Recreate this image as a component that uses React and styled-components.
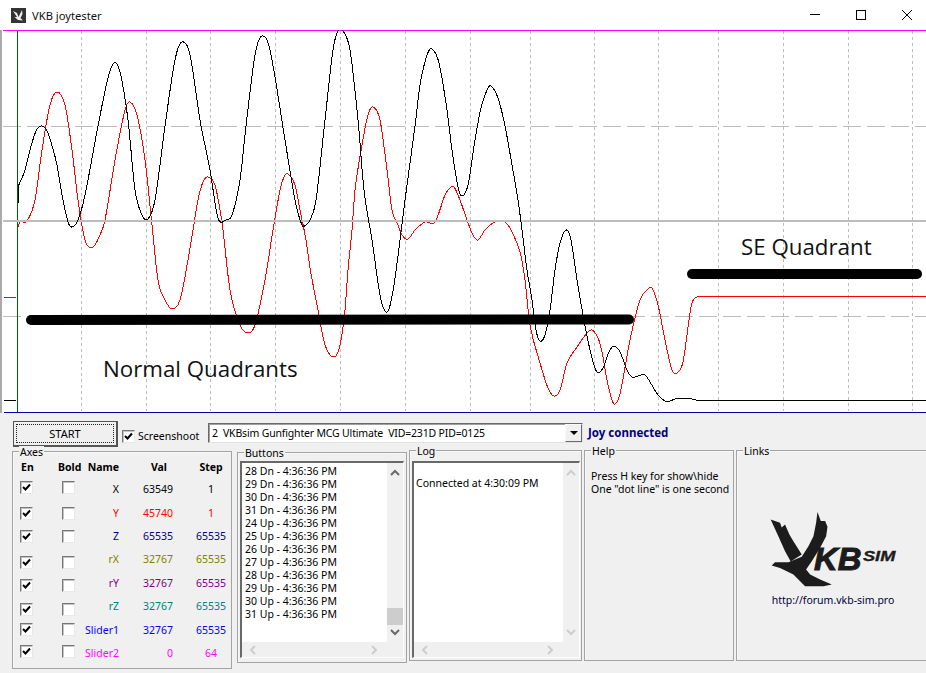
import React from 'react';
import styled, { createGlobalStyle } from 'styled-components';

const GlobalStyle = createGlobalStyle`
  html, body {
    margin: 0;
    padding: 0;
    background: #fff;
  }
  body {
    font-family: "Noto Sans", "Liberation Sans", sans-serif;
    font-size: 10.5px;
    color: #000;
    overflow: hidden;
  }
  * {
    box-sizing: border-box;
  }
`;

const Window = styled.div`
  width: 926px;
  height: 673px;
  display: flex;
  flex-direction: column;
  overflow: hidden;
`;

const TitleBar = styled.header`
  height: 30px;
  flex: none;
  display: flex;
  align-items: center;
  padding-left: 11px;
  background: #fff;
`;

const Title = styled.span`
  margin-left: 6px;
  font-size: 11.2px;
  color: #111;
`;

const WindowButtons = styled.div`
  margin-left: auto;
  margin-right: -4px;
  display: flex;
`;

const WindowButton = styled.span`
  width: 46px;
  height: 30px;
  display: flex;
  align-items: center;
  justify-content: center;
`;

const Chart = styled.main`
  position: relative;
  height: 383px;
  flex: none;
  border-left: 2px solid #aaa;
  background: #fff;

  svg {
    display: block;
  }
`;

const Note = styled.span`
  position: absolute;
  left: ${(props) => props.$left}px;
  top: ${(props) => props.$top}px;
  font-family: "Open Sans", "Noto Sans", sans-serif;
  font-size: 22.3px;
  line-height: 30px;
  color: #111;
  white-space: nowrap;
`;

const Panel = styled.section`
  flex: 1;
  display: flex;
  flex-direction: column;
  background: #f0f0f0;
`;

const Toolbar = styled.div`
  height: 37px;
  flex: none;
  display: flex;
  align-items: flex-start;
  padding: 8px 0 0 13px;
`;

const StartButton = styled.button`
  width: 105px;
  height: 26px;
  padding: 2px;
  font: inherit;
  font-size: 11px;
  color: #000;
  background: #f0f0f0;
  border: 1px solid #555;
  border-right-width: 2px;
  border-bottom-width: 2px;

  span {
    display: flex;
    height: 100%;
    align-items: center;
    justify-content: center;
    border: 1px dotted #222;
  }
`;

const CheckLabel = styled.label`
  display: flex;
  align-items: center;
  margin: 8px 0 0 4px;
  gap: 3px;
  width: 86px;
  white-space: nowrap;
`;

const Box = styled.span`
  width: 13px;
  height: 13px;
  flex: none;
  display: flex;
  align-items: center;
  justify-content: center;
  background: #fff;
  border: 1px solid;
  border-color: #777 #e8e8e8 #e8e8e8 #777;
  box-shadow: inset 1px 1px 0 #c4c4c4;
  transform: translateY(${(props) => props.$shift || 0}px);
`;

const Combo = styled.div`
  width: 375px;
  height: 20px;
  margin-top: 2px;
  display: flex;
  align-items: center;
  padding-left: 3px;
  background: #fff;
  border: 1px solid;
  border-color: #696969 #e3e3e3 #e3e3e3 #696969;
  box-shadow: inset 1px 1px 0 #a0a0a0;
  letter-spacing: -0.17px;
  white-space: pre;
`;

const ComboArrow = styled.span`
  margin-left: auto;
  width: 17px;
  height: 18px;
  display: flex;
  align-items: center;
  justify-content: center;
  background: #f0f0f0;
  border: 1px solid;
  border-color: #f8f8f8 #696969 #696969 #f8f8f8;

  &::after {
    content: '';
    border: 4px solid transparent;
    border-top: 4px solid #000;
    border-bottom: 0;
  }
`;

const Status = styled.strong`
  margin: 4px 0 0 5px;
  font-size: 11.5px;
  color: #000080;
  white-space: nowrap;
`;

const Groups = styled.div`
  flex: 1;
  display: flex;
  align-items: flex-start;
  padding-left: 12px;
`;

const Group = styled.div`
  position: relative;
  flex: ${(props) => (props.$width ? 'none' : 1)};
  width: ${(props) => (props.$width ? `${props.$width}px` : 'auto')};
  height: ${(props) => props.$height}px;
  margin-top: ${(props) => props.$top || 0}px;
  margin-left: ${(props) => props.$gap || 0}px;
  padding: ${(props) => props.$padding || '0'};
  border: 1px solid #a3a3a3;
  border-right-width: ${(props) => (props.$open ? 0 : 1)}px;
  box-shadow: inset 1px 1px 0 #f8f8f8;
`;

const Legend = styled.span`
  position: absolute;
  top: -6px;
  left: ${(props) => props.$left || 6}px;
  padding: 0 1px;
  line-height: 12px;
  background: #f0f0f0;
`;

const AxisRow = styled.div`
  display: grid;
  grid-template-columns: 38px 24px 37px 54px 58px;
  align-items: center;
  height: ${(props) => (props.$header ? 14 : 23.4)}px;
  padding-left: 7px;
  margin-bottom: ${(props) => (props.$header ? 3.5 : 0)}px;
  color: ${(props) => props.$color || '#000'};
  font-weight: ${(props) => (props.$header ? 700 : 400)};
`;

const BoldCell = styled.span`
  padding-left: ${(props) => props.$inset || 0}px;
  white-space: nowrap;
`;

const NameCell = styled.span`
  text-align: right;
  white-space: nowrap;
`;

const ValCell = styled.span`
  text-align: right;
  padding-right: ${(props) => (props.$header ? 6 : 0)}px;
`;

const StepCell = styled.span`
  text-align: center;
  padding-left: 18px;
`;

const ListBox = styled.div`
  height: 197px;
  display: grid;
  grid-template-columns: 1fr 16px;
  grid-template-rows: 1fr 15px;
  border: 1px solid;
  border-color: #696969 #fff #fff #696969;
  border-top-width: 2px;
  border-left-width: 2px;
`;

const ListBody = styled.div`
  background: #fff;
  padding: ${(props) => props.$top}px 0 0 ${(props) => props.$inset}px;
  line-height: 13px;
  white-space: pre;
  overflow: hidden;
`;

const VScroll = styled.div`
  display: flex;
  flex-direction: column;
  align-items: center;
  justify-content: space-between;
  padding: 6px 0;
  position: relative;
`;

const Thumb = styled.div`
  position: absolute;
  left: 0;
  right: 0;
  top: 145px;
  height: 17px;
  background: #cdcdcd;
`;

const HScroll = styled.div`
  grid-column: 1 / span 2;
  display: flex;
  align-items: center;
  justify-content: space-between;
  padding: 0 25px 0 7px;
`;

const HelpText = styled.p`
  margin: 19px 0 0 6px;
  line-height: 13px;
`;

const LinkBody = styled.div`
  display: flex;
  flex-direction: column;
  align-items: center;
  padding: 60px 0 0 3px;
`;

const Url = styled.span`
  margin-top: 5px;
  color: #000040;
`;

const BLACK = [
  [18, 187], [25, 170], [30, 150], [36, 131], [41, 126], [46, 129], [51, 142], [57, 165], [62, 195], [68, 222], [72, 227],
  [78, 220], [85, 195], [98, 126], [108, 78], [114, 63], [120, 72], [128, 120], [135, 190], [142, 215], [148, 219], [155, 200],
  [165, 126], [175, 60], [182, 42], [190, 55], [200, 120], [210, 170], [218, 218], [226, 220], [232, 215], [240, 180],
  [246, 126], [255, 55], [262, 36], [270, 50], [285, 140], [295, 200], [302, 225], [306, 225], [310, 220], [316, 200],
  [325, 120], [333, 50], [338, 31], [343, 31], [350, 50], [358, 120], [364, 190], [372, 240], [380, 295], [385, 311],
  [389, 309], [394, 285], [400, 240], [405, 200], [415, 126], [420, 85], [427, 55], [432, 49], [439, 63], [447, 110],
  [452, 150], [458, 187], [462, 196], [468, 185], [475, 140], [481, 108], [487, 90], [491, 86], [498, 98], [505, 126],
  [512, 165], [518, 200], [522, 230], [527, 270], [532, 300], [536, 330], [540, 341], [545, 335], [550, 310], [555, 270],
  [560, 243], [566, 230], [571, 240], [577, 280], [583, 315], [590, 350], [595, 368], [598, 373], [603, 368], [609, 352],
  [614, 346], [620, 352], [627, 370], [632, 377], [638, 376], [645, 375], [650, 382], [658, 395], [665, 401], [670, 401],
  [675, 399], [692, 399], [696, 400], [926, 400],
];

const RED = [
  [18, 227], [20, 222], [27, 221], [35, 200], [42, 150], [50, 105], [57, 92], [65, 105], [72, 150], [78, 200], [85, 240], [93, 247],
  [100, 235], [105, 220], [115, 160], [125, 110], [130, 102], [137, 115], [145, 160], [152, 225], [158, 280], [165, 300],
  [172, 309], [180, 300], [188, 260], [193, 230], [198, 200], [203, 182], [208, 177], [215, 185], [220, 210], [223, 230],
  [230, 290], [240, 325], [248, 333], [255, 325], [265, 280], [273, 230], [280, 190], [284, 177], [288, 174], [295, 185],
  [300, 210], [306, 240], [310, 268], [318, 310], [325, 345], [334, 357], [340, 345], [345, 310], [348, 270], [352, 230],
  [355, 190], [362, 145], [368, 115], [373, 107], [380, 120], [387, 170], [392, 210], [398, 225], [402, 235], [408, 239],
  [415, 230], [425, 222], [435, 222], [445, 195], [450, 188], [454, 187], [460, 200], [467, 220], [473, 235], [478, 240],
  [485, 230], [495, 222], [505, 222], [512, 232], [520, 252], [525, 280], [530, 325], [540, 363], [548, 388], [554, 396],
  [560, 390], [567, 363], [577, 347], [587, 333], [592, 330], [598, 338], [602, 352], [607, 380], [612, 400], [615, 404],
  [620, 394], [630, 340], [640, 300], [648, 289], [652, 288], [658, 305], [665, 340], [672, 370], [677, 373], [683, 362],
  [689, 320], [692, 303], [697, 297], [926, 297],
];

const GRID_X = [81, 146, 210, 275, 340, 405, 470, 530, 594, 658, 718, 783, 848, 912];

// hermite through the sampled points, x only ever grows so this can't loop
const smooth = (points) => {
  const slope = (i) => {
    const a = points[Math.max(i - 1, 0)];
    const b = points[Math.min(i + 1, points.length - 1)];
    return (b[1] - a[1]) / (b[0] - a[0]);
  };
  let d = `M${points[0][0]} ${points[0][1]}`;
  for (let i = 0; i < points.length - 1; i += 1) {
    const [x1, y1] = points[i];
    const [x2, y2] = points[i + 1];
    const h = (x2 - x1) / 3;
    d += ` C${(x1 + h).toFixed(1)} ${(y1 + slope(i) * h).toFixed(1)} ${(x2 - h).toFixed(1)} ${(y2 - slope(i + 1) * h).toFixed(1)} ${x2} ${y2}`;
  }
  return d;
};

const AXES = [
  { name: 'X', val: 63549, step: 1, color: '#000', shift: -2 },
  { name: 'Y', val: 45740, step: 1, color: '#ff0000', shift: 1 },
  { name: 'Z', val: 65535, step: 65535, color: '#000080', shift: 1 },
  { name: 'rX', val: 32767, step: 65535, color: '#808000', shift: 3 },
  { name: 'rY', val: 32767, step: 65535, color: '#800080', shift: 3 },
  { name: 'rZ', val: 32767, step: 65535, color: '#008080', shift: 3 },
  { name: 'Slider1', val: 32767, step: 65535, color: '#0000ff', shift: 0 },
  { name: 'Slider2', val: 0, step: 64, color: '#ff00ff', shift: -1 },
];

const EVENTS = [
  '28 Dn', '29 Dn', '30 Dn', '31 Dn', '24 Up', '25 Up', '26 Up', '27 Up', '28 Up', '29 Up', '30 Up', '31 Up',
];

const Check = ({ checked, shift }) => (
  <Box $shift={shift}>
    {checked && (
      <svg width="9" height="9" viewBox="0 0 9 9">
        <path d="M1 4 L3.5 6.5 L8 1.5" fill="none" stroke="#000" strokeWidth="2" />
      </svg>
    )}
  </Box>
);

const Chevron = ({ dir, light }) => {
  const paths = {
    up: 'M1 6 L5 2 L9 6',
    down: 'M1 2 L5 6 L9 2',
    left: 'M6 1 L2 5 L6 9',
    right: 'M2 1 L6 5 L2 9',
  };
  const wide = dir === 'up' || dir === 'down';
  return (
    <svg width={wide ? 10 : 8} height={wide ? 8 : 10} viewBox={wide ? '0 0 10 8' : '0 0 8 10'}>
      <path d={paths[dir]} fill="none" stroke={light ? '#cdcdcd' : '#6a6a6a'} strokeWidth="2" />
    </svg>
  );
};

const AppIcon = () => (
  <svg width="15" height="15" viewBox="0 0 15 15">
    <rect width="15" height="15" fill="#333" />
    <path d="M2 3 L6 5 L7.5 9 L11 2 L11.5 6 L9.5 10 L12 12.5 L7 12 L3.5 9 L6 9 Z" fill="#eee" />
  </svg>
);

const Logo = () => (
  <svg width="127" height="77" viewBox="120 215 380 230">
    <g fill="#1c1c1c">
      <path d="M122 240 L150 250 L155 264 L165 255 L178 285 L190 305 L215 345 L182 366 L165 335 L145 290 Z" />
      <path d="M262 218 L272 245 L285 245 L292 262 L288 290 L270 325 L245 365 L228 390 L240 405 L270 420 L305 435 L280 440 L225 440 L190 405 L150 385 L125 378 L135 368 L175 368 L215 352 L235 320 L250 290 L258 250 Z" />
      <text x="252" y="390" stroke="#1c1c1c" strokeWidth="3" fontFamily="Liberation Sans" fontWeight="700" fontStyle="italic" fontSize="92" textLength="142" lengthAdjust="spacingAndGlyphs">KB</text>
      <text x="398" y="365" stroke="#1c1c1c" strokeWidth="1" fontFamily="Liberation Sans" fontWeight="700" fontStyle="italic" fontSize="42" textLength="97" lengthAdjust="spacingAndGlyphs">SIM</text>
    </g>
  </svg>
);

const Graph = () => (
  <svg width="924" height="383" viewBox="2 30 924 383" shapeRendering="crispEdges">
    {GRID_X.map((x) => (
      <line key={x} x1={x + 0.5} x2={x + 0.5} y1="31" y2="411" stroke="#bdbdbd" strokeDasharray="3 3" />
    ))}
    <line x1="3" x2="926" y1="126.5" y2="126.5" stroke="#bdbdbd" strokeDasharray="18 6" />
    <line x1="3" x2="926" y1="316.5" y2="316.5" stroke="#bdbdbd" strokeDasharray="18 6" />
    <line x1="3" x2="926" y1="30.5" y2="30.5" stroke="#ff00ff" />
    <line x1="4" x2="926" y1="412.5" y2="412.5" stroke="#0000a0" />
    <line x1="17.5" x2="17.5" y1="31" y2="412" stroke="#006400" />
    <line x1="4" x2="16" y1="297.5" y2="297.5" stroke="#ff0000" />
    <line x1="4" x2="16" y1="400.5" y2="400.5" stroke="#000" />
    <line x1="18.5" x2="18.5" y1="187" y2="203" stroke="#000" />
    <path d={smooth(RED)} fill="none" stroke="#ff0000" />
    <line x1="3" x2="926" y1="221" y2="221" stroke="#bdbdbd" strokeWidth="2" />
    <path d={smooth(BLACK)} fill="none" stroke="#000" />
    <g shapeRendering="auto" stroke="#000" strokeWidth="10" strokeLinecap="round">
      <line x1="31" x2="629" y1="320" y2="319.5" />
      <line x1="692" x2="917" y1="274" y2="274" />
    </g>
  </svg>
);

const App = () => (
  <Window>
    <GlobalStyle />
    <TitleBar>
      <AppIcon />
      <Title>VKB joytester</Title>
      <WindowButtons>
        <WindowButton>
          <svg width="10" height="10" viewBox="0 0 10 10">
            <line x1="0" x2="10" y1="4.5" y2="4.5" stroke="#000" />
          </svg>
        </WindowButton>
        <WindowButton>
          <svg width="10" height="10" viewBox="0 0 10 10">
            <rect x="0.5" y="0.5" width="9" height="9" fill="none" stroke="#000" />
          </svg>
        </WindowButton>
        <WindowButton>
          <svg width="10" height="10" viewBox="0 0 10 10">
            <path d="M0 0 L10 10 M10 0 L0 10" stroke="#000" />
          </svg>
        </WindowButton>
      </WindowButtons>
    </TitleBar>
    <Chart>
      <Graph />
      <Note $left={101} $top={324}>Normal Quadrants</Note>
      <Note $left={739} $top={202}>SE Quadrant</Note>
    </Chart>
    <Panel>
      <Toolbar>
        <StartButton><span>START</span></StartButton>
        <CheckLabel><Check checked />Screenshoot</CheckLabel>
        <Combo>
          2  VKBsim Gunfighter MCG Ultimate  VID=231D PID=0125
          <ComboArrow />
        </Combo>
        <Status>Joy connected</Status>
      </Toolbar>
      <Groups>
        <Group $width={220} $height={218} $top={1} $padding="8px 0 0 0">
          <Legend>Axes</Legend>
          <AxisRow $header>
            <BoldCell $inset={1}>En</BoldCell>
            <BoldCell>Bold</BoldCell>
            <NameCell>Name</NameCell>
            <ValCell $header>Val</ValCell>
            <StepCell>Step</StepCell>
          </AxisRow>
          {AXES.map((axis) => (
            <AxisRow key={axis.name} $color={axis.color}>
              <Check checked shift={axis.shift} />
              <BoldCell $inset={4}><Check shift={axis.shift} /></BoldCell>
              <NameCell>{axis.name}</NameCell>
              <ValCell>{axis.val}</ValCell>
              <StepCell>{axis.step}</StepCell>
            </AxisRow>
          ))}
        </Group>
        <Group $width={170} $height={211} $top={2} $gap={5} $padding="8px 2px 0">
          <Legend>Buttons</Legend>
          <ListBox>
            <ListBody $inset={3} $top={2}>
              {EVENTS.map((event, i) => (
                <div key={i}>{event} - 4:36:36 PM</div>
              ))}
            </ListBody>
            <VScroll>
              <Chevron dir="up" />
              <Thumb />
              <Chevron dir="down" />
            </VScroll>
            <HScroll>
              <Chevron dir="left" light />
              <Chevron dir="right" light />
            </HScroll>
          </ListBox>
        </Group>
        <Group $width={173} $height={211} $gap={2} $padding="10px 1px 0 2px">
          <Legend>Log</Legend>
          <ListBox>
            <ListBody $inset={2} $top={1}>
              <div>{' '}</div>
              <div>Connected at 4:30:09 PM</div>
            </ListBody>
            <VScroll>
              <Chevron dir="up" light />
              <Chevron dir="down" light />
            </VScroll>
            <HScroll>
              <Chevron dir="left" light />
              <Chevron dir="right" light />
            </HScroll>
          </ListBox>
        </Group>
        <Group $width={150} $height={211} $gap={2}>
          <Legend>Help</Legend>
          <HelpText>
            Press H key for show\hide
            <br />
            One "dot line" is one second
          </HelpText>
        </Group>
        <Group $height={211} $gap={2} $open>
          <Legend>Links</Legend>
          <LinkBody>
            <Logo />
            <Url>http://forum.vkb-sim.pro</Url>
          </LinkBody>
        </Group>
      </Groups>
    </Panel>
  </Window>
);

export default App;
